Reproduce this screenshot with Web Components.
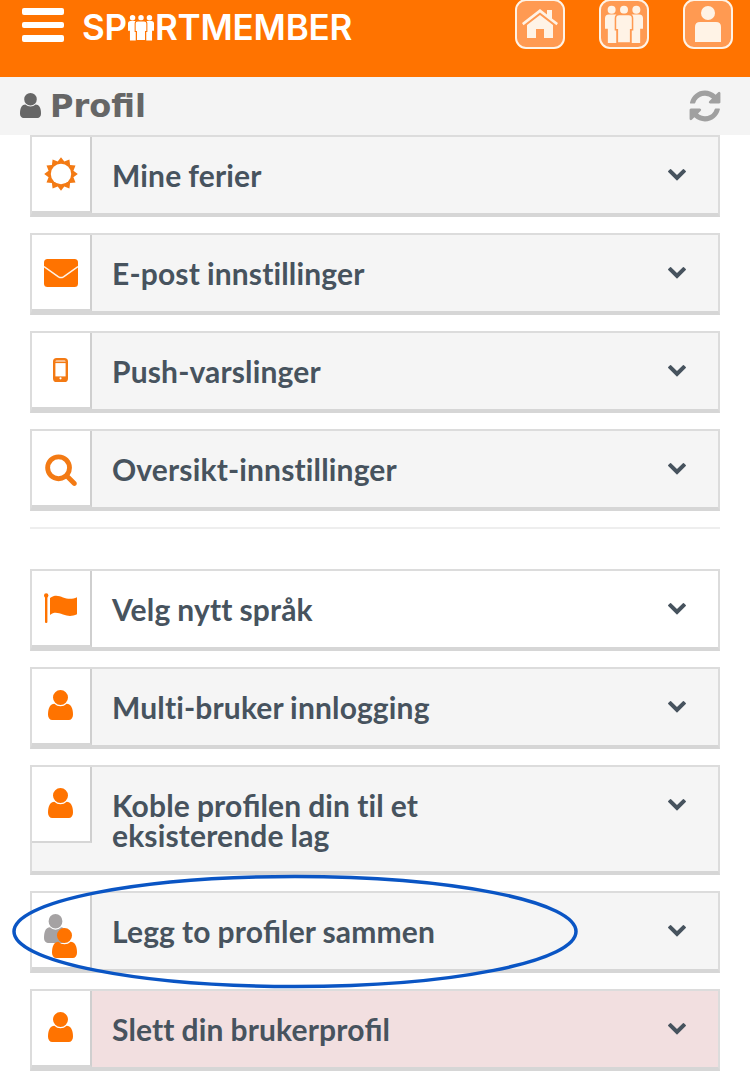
<!doctype html>
<html lang="nb">
<head>
<meta charset="utf-8">
<title>Profil</title>
<style>
  html, body { margin: 0; height: 1071px; overflow: hidden; background: #fff; }
  body { font-family: "Lato", sans-serif; position: relative; }
  /* only the fi pair is joined in the reference, not tt or ti */
  .lig { letter-spacing: 0; font-variant-ligatures: common-ligatures; }
</style>
</head>
<body>
<sm-header></sm-header>
<sm-title>Profil</sm-title>
<sm-list>
  <sm-row icon="sun">Mine ferier</sm-row>
  <sm-row icon="envelope">E-post innstillinger</sm-row>
  <sm-row icon="mobile">Push-varslinger</sm-row>
  <sm-row icon="search">Oversikt-innstillinger</sm-row>
  <sm-divider></sm-divider>
  <sm-row icon="flag" tone="white">Velg nytt språk</sm-row>
  <sm-row icon="user">Multi-bruker innlogging</sm-row>
  <sm-row icon="user">Koble pro<span class="lig">fi</span>len din til et<br>eksisterende lag</sm-row>
  <sm-row icon="merge">Legg to pro<span class="lig">fi</span>ler sammen</sm-row>
  <sm-row icon="user" tone="pink">Slett din brukerpro<span class="lig">fi</span>l</sm-row>
</sm-list>
<sm-callout></sm-callout>

<script>
// FontAwesome-style glyphs, all on a 1792 grid.
const USER = "M1536 1399q0 109-62.5 187t-150.5 78h-854q-88 0-150.5-78t-62.5-187q0-85 8.5-160.5t31.5-152 58.5-131 94-89 134.5-34.5q131 128 313 128t313-128q76 0 134.5 34.5t94 89 58.5 131 31.5 152 8.5 160.5zm-256-887q0 159-112.5 271.5t-271.5 112.5-271.5-112.5-112.5-271.5 112.5-271.5 271.5-112.5 271.5 112.5 112.5 271.5z";
const CHEVRON = "M1683 808l-742 741q-19 19-45 19t-45-19l-742-741q-19-19-19-45.5t19-45.5l166-165q19-19 45-19t45 19l531 531 531-531q19-19 45-19t45 19l166 165q19 19 19 45.5t-19 45.5z";
const REFRESH = "M1639 1056q0 5-1 7-64 268-268 434.5t-478 166.5q-146 0-282.5-55t-243.5-157l-129 129q-19 19-45 19t-45-19-19-45v-448q0-26 19-45t45-19h448q26 0 45 19t19 45-19 45l-137 137q71 66 161 102t187 36q134 0 250-65t186-179q11-17 53-117 8-23 30-23h192q13 0 22.5 9.5t9.5 22.5zm25-800v448q0 26-19 45t-45 19h-448q-26 0-45-19t-19-45 19-45l138-138q-148-137-349-137-134 0-250 65t-186 179q-11 17-53 117-8 23-30 23h-199q-13 0-22.5-9.5t-9.5-22.5v-7q65-268 270-434.5t480-166.5q146 0 284 55.5t245 156.5l130-129q19-19 45-19t45 19 19 45z";
const SEARCH = "M1216 832q0-185-131.5-316.5t-316.5-131.5-316.5 131.5-131.5 316.5 131.5 316.5 316.5 131.5 316.5-131.5 131.5-316.5zm512 832q0 52-38 90t-90 38q-54 0-90-38l-343-342q-179 124-399 124-143 0-273.5-55.5t-225-150-150-225-55.5-273.5 55.5-273.5 150-225 225-150 273.5-55.5 273.5 55.5 225 150 150 225 55.5 273.5q0 220-124 399l343 343q37 37 37 90z";
const ORANGE = "#ff7300";

// Spiky ring for the holiday icon.
function sunPoints() {
  const pts = [];
  for (let i = 0; i < 24; i++) {
    const r = i % 2 ? 12.8 : 16.8;
    const a = (i * Math.PI) / 12;
    pts.push((17 + r * Math.sin(a)).toFixed(1) + "," + (17 - r * Math.cos(a)).toFixed(1));
  }
  return pts.join(" ");
}

const ICONS = {
  sun: `<svg width="34" height="34" viewBox="0 0 34 34"><polygon points="${sunPoints()}" fill="#f37a14"/><circle cx="17" cy="17" r="10.2" fill="#fff"/></svg>`,
  envelope: `<svg width="34" height="28" viewBox="0 0 34 28" style="margin-top:2px"><rect width="34" height="28" rx="3.5" fill="${ORANGE}"/><path d="M0 7.500 14.500 17.800q2.500 1.500 5 0L34 7.500" fill="none" stroke="#fff3e6" stroke-width="1.500"/></svg>`,
  mobile: `<svg width="15" height="24" viewBox="0 0 15 24" style="margin-right:1px"><rect x="1.200" y="1.200" width="12.600" height="21.600" rx="2.400" fill="none" stroke="#f37a14" stroke-width="2.400"/><rect x="1" y="3.500" width="13" height="1.600" fill="#f37a14"/><rect x="1" y="18.400" width="13" height="4" fill="#f37a14"/><circle cx="7.500" cy="20.300" r="1.100" fill="#fff"/></svg>`,
  search: `<svg width="34" height="34" viewBox="0 0 1792 1792" style="margin-top:2px"><path d="${SEARCH}" fill="#f37a14"/></svg>`,
  flag: `<svg width="34" height="30" viewBox="0 0 34 30"><rect x="1" y="2" width="2.400" height="28" rx="1" fill="${ORANGE}"/><circle cx="2.200" cy="2.400" r="2.200" fill="${ORANGE}"/><path d="M6 5C11 1.500 15 3 19 4.500s9 2.200 14-.2v17c-5 2.200-9 2-14 .2s-9-3-13 .5z" fill="${ORANGE}"/></svg>`,
  user: `<svg width="25" height="30" viewBox="256 128 1280 1536" preserveAspectRatio="none" style="margin:-2px 2px 0 0"><path d="${USER}" fill="${ORANGE}"/></svg>`,
  merge: `<svg width="33" height="44" viewBox="0 0 33 44" style="margin:12px 2px 0 0"><svg x="0" y="0" width="23" height="29" viewBox="256 128 1280 1536" preserveAspectRatio="none"><path d="${USER}" fill="#a5a2a3"/></svg><svg x="8" y="14" width="25" height="30" viewBox="256 128 1280 1536" preserveAspectRatio="none"><path d="${USER}" fill="${ORANGE}" stroke="${ORANGE}"/></svg></svg>`,
};

class SmHeader extends HTMLElement {
  constructor() {
    super();
    this.attachShadow({ mode: "open" });
    // Little group of three people, used inside the logo and the team button.
    const people = (fill, gap) => `
      <circle cx="7" cy="5" r="4.200" fill="${fill}"/><circle cx="20" cy="5" r="4.200" fill="${fill}"/><circle cx="33" cy="5" r="4.200" fill="${fill}"/>
      <path d="M0 14q0-4 4-4h8v30H3V25H0zM40 14q0-4-4-4h-8v30h9V25h3z" fill="${fill}"/>
      <path d="M11 14q0-4 4-4h10q4 0 4 4v12h-2v14H13V26h-2z" fill="${fill}" stroke="${gap}" stroke-width="1.600"/>`;
    this.shadowRoot.innerHTML = `
      <style>
        :host {
          display: flex;
          align-items: flex-start;
          height: 77px;
          background: #ff7300;
          color: #fff;
          font-family: "Inter", "Liberation Sans", sans-serif;
        }
        .burger {
          display: flex;
          flex-direction: column;
          gap: 7px;
          width: 42px;
          margin: 8px 0 0 22px;
        }
        .burger i { display: block; height: 6.500px; border-radius: 2px; background: #fff; }
        .logo {
          display: flex;
          align-items: center;
          margin: 9px 0 0 18px;
          height: 36px;
          font-size: 35px;
          font-weight: 600;
          letter-spacing: -0.2px;
          line-height: 36px;
        }
        .logo svg { margin: 0 1px; }
        nav { display: flex; gap: 34px; margin: -1px 17px 0 auto; }
        nav a {
          display: flex;
          align-items: center;
          justify-content: center;
          box-sizing: border-box;
          width: 50px;
          height: 50px;
          border: 2.500px solid #fff3e6;
          border-radius: 11px;
          background: #ff9a52;
        }
      </style>
      <div class="burger"><i></i><i></i><i></i></div>
      <div class="logo">SP<svg width="26" height="27" viewBox="0 0 40 40">${people("#fff", "#ff7300")}</svg>RTMEMBER</div>
      <nav>
        <a><svg width="36" height="32" viewBox="0 0 36 32"><path d="M0 15 18 1l7 5.500V2h5v8.500l6 4.500-1.500 2.200L18 4.500 1.500 17.200z" fill="#fff3e6"/><path d="M5 17 18 7l13 10v13H22v-9h-8v9H5z" fill="#fff3e6"/></svg></a>
        <a><svg width="38" height="38" viewBox="0 0 40 40">${people("#fff3e6", "#ff9a52")}</svg></a>
        <a><svg width="28" height="38" viewBox="0 0 28 38"><circle cx="14" cy="8" r="7" fill="#fff3e6"/><path d="M1 22q0-5 5-5h16q5 0 5 5v15H1z" fill="#fff3e6"/></svg></a>
      </nav>`;
  }
}

class SmTitle extends HTMLElement {
  constructor() {
    super();
    this.attachShadow({ mode: "open" });
    this.shadowRoot.innerHTML = `
      <style>
        :host {
          display: flex;
          align-items: center;
          height: 58px;
          padding: 0 27px 0 20px;
          background: #f4f4f4;
          color: #666;
          font-family: "DejaVu Sans", sans-serif;
          font-size: 32px;
          font-weight: 700;
        }
        .label { margin-left: 9px; line-height: 58px; }
        .reload { margin-left: auto; }
      </style>
      <svg width="21" height="25" viewBox="256 128 1280 1536" preserveAspectRatio="none" style="margin-top:-2px"><path d="${USER}" fill="#666"/></svg>
      <span class="label"><slot></slot></span>
      <svg class="reload" width="36" height="36" viewBox="0 0 1792 1792"><path d="${REFRESH}" fill="#a0a0a0"/></svg>`;
  }
}

class SmList extends HTMLElement {
  constructor() {
    super();
    this.attachShadow({ mode: "open" });
    this.shadowRoot.innerHTML = `
      <style>
        :host { display: flex; flex-direction: column; gap: 16px; padding: 0 30px; }
      </style>
      <slot></slot>`;
  }
}

class SmDivider extends HTMLElement {
  constructor() {
    super();
    this.attachShadow({ mode: "open" });
    this.shadowRoot.innerHTML = `
      <style>
        :host { display: block; height: 2px; margin-bottom: 24px; background: #eee; }
      </style>`;
  }
}

class SmRow extends HTMLElement {
  static get observedAttributes() { return ["icon", "tone"]; }

  constructor() {
    super();
    this.attachShadow({ mode: "open" });
    this.shadowRoot.innerHTML = `
      <style>
        :host {
          display: flex;
          align-items: flex-start;
          box-sizing: border-box;
          min-height: 82px;
          border: 2px solid #dcdcdc;
          border-bottom: 4px solid #d6d6d6;
          background: #f5f5f5;
          color: #47535e;
          font-family: "Lato", sans-serif;
          font-size: 30px;
          font-weight: 700;
          letter-spacing: 0.15px;
          word-spacing: -0.5px;
          font-variant-ligatures: none;
        }
        :host([tone="white"]) { background: #fff; }
        :host([tone="pink"]) { background: #f2dfe0; }
        .icon {
          flex: none;
          display: flex;
          align-items: center;
          justify-content: center;
          box-sizing: border-box;
          width: 60px;
          height: 76px;
          background: #fff;
          border-right: 2px solid #cfcfcf;
          border-bottom: 2px solid #d6d6d6;
        }
        .label { flex: 1; padding: 23px 0 21px 20px; line-height: 30px; }
        .chevron { flex: none; margin: 26px 31px 0 0; }
      </style>
      <div class="icon"></div>
      <div class="label"><slot></slot></div>
      <svg class="chevron" width="20" height="20" viewBox="0 0 1792 1792"><path d="${CHEVRON}" fill="#47535e"/></svg>`;
  }

  connectedCallback() { this._render(); }
  attributeChangedCallback() { this._render(); }

  _render() {
    this.shadowRoot.querySelector(".icon").innerHTML = ICONS[this.getAttribute("icon")] || "";
  }
}

// Hand-drawn blue ring that someone put on top of the screenshot.
class SmCallout extends HTMLElement {
  constructor() {
    super();
    this.attachShadow({ mode: "open" });
    this.shadowRoot.innerHTML = `
      <style>
        :host { position: absolute; left: 0; top: 870px; width: 600px; height: 125px; pointer-events: none; }
        svg { display: block; }
      </style>
      <svg width="600" height="125" viewBox="0 0 600 125"><ellipse cx="295" cy="61.500" rx="281" ry="55" fill="none" stroke="#0a55c4" stroke-width="3.500"/></svg>`;
  }
}

customElements.define("sm-header", SmHeader);
customElements.define("sm-title", SmTitle);
customElements.define("sm-list", SmList);
customElements.define("sm-divider", SmDivider);
customElements.define("sm-row", SmRow);
customElements.define("sm-callout", SmCallout);
</script>
</body>
</html>
